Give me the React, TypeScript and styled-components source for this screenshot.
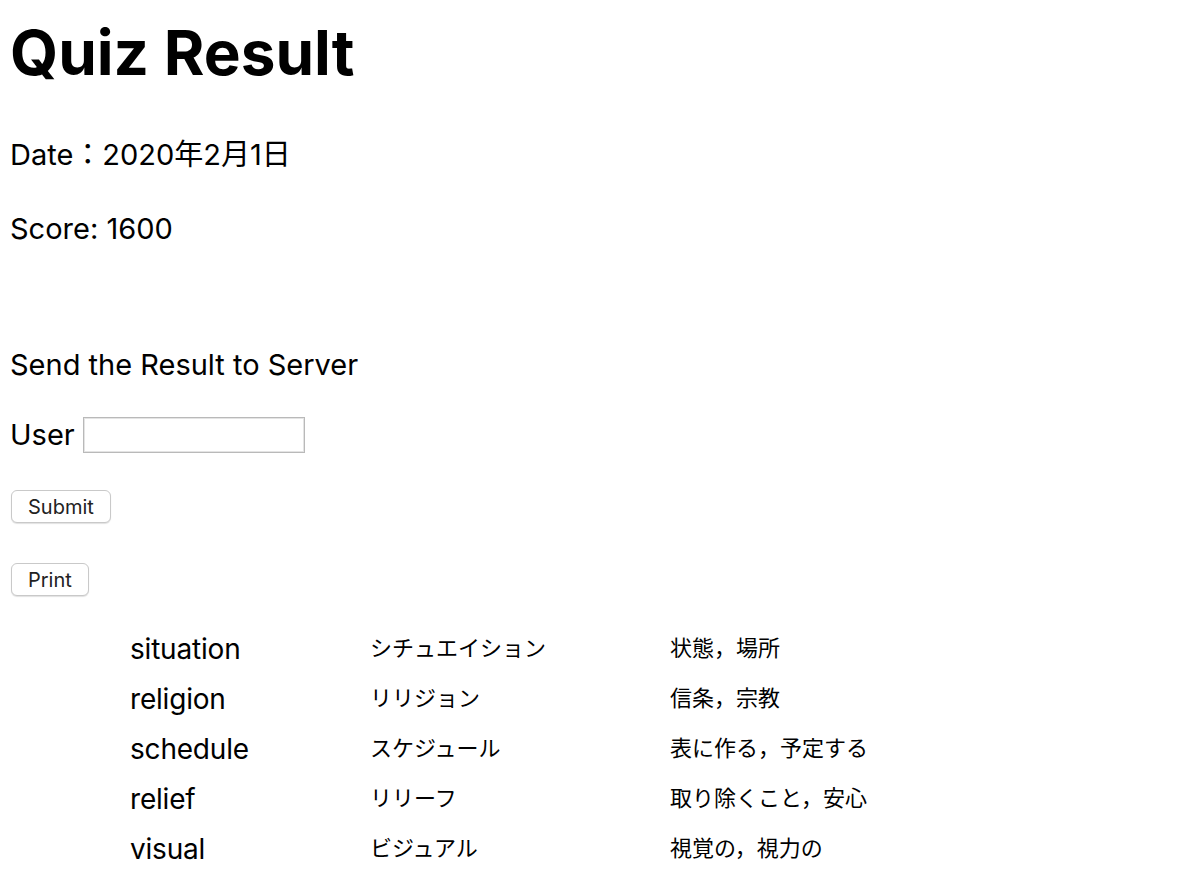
import React from "react";
import styled, { createGlobalStyle } from "styled-components";

const Global = createGlobalStyle`
  html, body {
    margin: 0;
    padding: 0;
    background: #ffffff;
  }
  body {
    font-family: Inter, "Noto Sans CJK JP", sans-serif;
    color: #000000;
  }
`;

const Page = styled.main`
  display: flex;
  flex-direction: column;
  align-items: flex-start;
  padding: 19px 0 0 10px;
`;

const Title = styled.h1`
  margin: 0;
  font-size: 62px;
  font-weight: 700;
  line-height: 68px;
`;

const Line = styled.p<{ $top: number }>`
  margin: ${(p) => p.$top}px 0 0 0;
  font-size: 29px;
  line-height: 34px;
`;

const UserRow = styled.label`
  display: flex;
  align-items: center;
  gap: 8px;
  margin-top: 35px;
  font-size: 29px;
  line-height: 34px;
`;

const TextInput = styled.input`
  box-sizing: border-box;
  width: 222px;
  height: 36px;
  margin: 0;
  border: 1px solid #b9b9b9;
  box-shadow: inset 0 0 0 1px #e4e4e4;
  background: #ffffff;
  font-size: 20px;
  padding: 0 6px;
`;

const Button = styled.button<{ $top: number }>`
  box-sizing: border-box;
  margin: ${(p) => p.$top}px 0 0 1px;
  height: 33px;
  padding: 0 16px;
  border: 1px solid #c9c9c9;
  border-radius: 6px;
  background: #ffffff;
  box-shadow: 0 1px 1px rgba(0, 0, 0, 0.12);
  font-family: Inter, "Noto Sans CJK JP", sans-serif;
  font-size: 20px;
  color: #222222;
  cursor: pointer;
`;

const WordTable = styled.div`
  display: grid;
  grid-template-columns: 240px 300px auto;
  grid-auto-rows: 50px;
  align-items: center;
  margin: 28px 0 0 120px;
`;

const Word = styled.span`
  font-size: 28px;
  letter-spacing: -0.2px;
`;

const Kana = styled.span`
  font-size: 22px;
  font-family: "Noto Sans CJK JP", sans-serif;
  margin-top: -6px;
`;

const Meaning = styled.span`
  font-size: 22px;
  font-family: "Noto Sans CJK JP", sans-serif;
  margin-top: -6px;
`;

const words = [
  { en: "situation", kana: "シチュエイション", ja: "状態，場所" },
  { en: "religion", kana: "リリジョン", ja: "信条，宗教" },
  { en: "schedule", kana: "スケジュール", ja: "表に作る，予定する" },
  { en: "relief", kana: "リリーフ", ja: "取り除くこと，安心" },
  { en: "visual", kana: "ビジュアル", ja: "視覚の，視力の" },
];

export default function App() {
  return (
    <>
      <Global />
      <Page>
        <Title>Quiz Result</Title>
        <Line $top={51}>Date：2020年2月1日</Line>
        <Line $top={40}>Score: 1600</Line>
        <Line $top={102}>Send the Result to Server</Line>
        <UserRow>
          User
          <TextInput type="text" />
        </UserRow>
        <Button $top={37}>Submit</Button>
        <Button $top={40}>Print</Button>
        <WordTable>
          {words.map((w) => (
            <React.Fragment key={w.en}>
              <Word>{w.en}</Word>
              <Kana>{w.kana}</Kana>
              <Meaning>{w.ja}</Meaning>
            </React.Fragment>
          ))}
        </WordTable>
      </Page>
    </>
  );
}
